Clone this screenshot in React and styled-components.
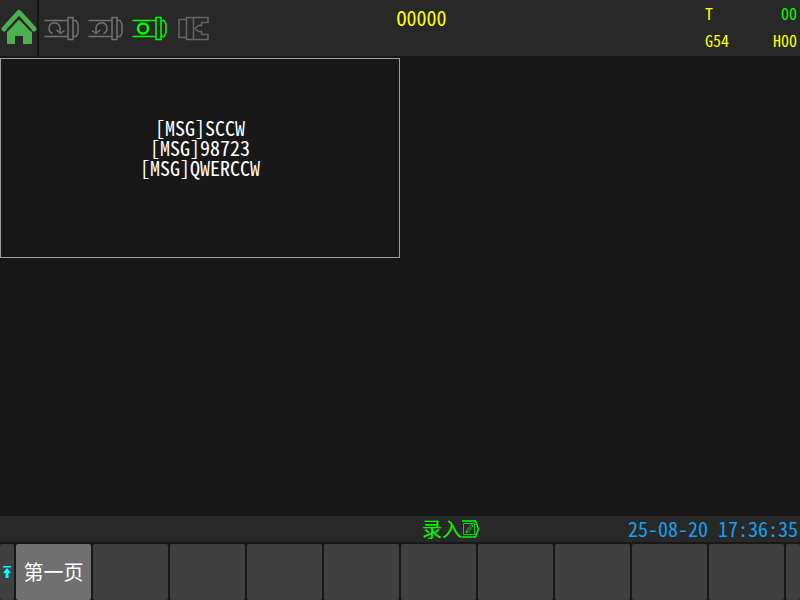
import React from "react";
import styled, { createGlobalStyle, css } from "styled-components";

const softKeys = ["第一页", "", "", "", "", "", "", "", "", ""];
const messages = ["[MSG]SCCW", "[MSG]98723", "[MSG]QWERCCW"];

const HomeIcon = () => (
  <svg width="36" height="36" viewBox="0 0 36 36" aria-hidden="true">
    <path
      d="M3 20 L18 3.500 L33 20"
      fill="none"
      stroke="#4caf50"
      strokeWidth="5"
      strokeLinecap="round"
      strokeLinejoin="round"
    />
    <path
      d="M18 10.500 L31 23 V34 Q31 35 30 35 H22 V27 H14 V35 H7 Q6 35 6 34 V23 Z"
      fill="#4caf50"
    />
    <path
      d="M6 21.500 L18 8.500 L30 21.500"
      fill="none"
      stroke="#282828"
      strokeWidth="2"
    />
  </svg>
);

const SpindleBody = () => (
  <>
    <path d="M0.500 5.500 H23.500 M0.500 21.500 H23.500" />
    <path d="M24 2.500 H29 V24.500 H24 Z" />
    <path d="M29 5.500 H32 L34 9 V18 L32 21.500 H29" />
  </>
);

const SpindleCw = () => (
  <DrawnIcon width="36" height="26" $color="#737373">
    <SpindleBody />
    <path d="M8.500 18.500 A5.500 5.500 0 1 1 16 13 V17 M12.500 15 L16.500 18.500 L20.500 15.500" />
  </DrawnIcon>
);

const SpindleCcw = () => (
  <DrawnIcon width="36" height="26" $color="#737373">
    <SpindleBody />
    <path d="M15.500 18.500 A5.500 5.500 0 1 0 8 13 V17 M4 15.500 L8 18.500 L12 15" />
  </DrawnIcon>
);

const SpindleStop = () => (
  <DrawnIcon width="36" height="26" $color="#00ff00">
    <SpindleBody />
    <circle cx="11" cy="13.500" r="5" strokeWidth="2.500" />
  </DrawnIcon>
);

const Chuck = () => (
  <DrawnIcon width="34" height="26" viewBox="-2 0 34 26" $color="#666666">
    <path d="M8.500 4.500 H1 V22.500 H8.500" />
    <path d="M8.500 2.500 H30 V7.500 H23.500 V10.500 H20.500 L17 13.500 L20.500 16.500 H23.500 V19.500 H30 V24.500 H8.500 Z" />
    <path d="M15.500 2.500 V24.500" />
  </DrawnIcon>
);

const EditIcon = () => (
  <DrawnIcon width="18" height="18" $color="#00ff00">
    <path d="M0 1 H13.500 L16.500 9 L13.500 17 H0" />
    <Thin d="M1.500 3.500 H12.500 V14.500 H1.500 Z" />
    <Thin d="M4 13 L4.500 10.500 L9.500 4.500 L11 6 L6 12 Z" />
  </DrawnIcon>
);

const PageUpIcon = () => (
  <svg width="8" height="14" viewBox="0 0 8 14" aria-hidden="true">
    <path
      d="M0 1 H8 V2.500 H0 Z M4 3 L8 8 H5.500 V13 H2.500 V8 H0 Z"
      fill="#00ffff"
    />
  </svg>
);

export default function App() {
  return (
    <>
      <GlobalStyle />
      <Screen>
        <Header>
          <HomeButton aria-label="Home">
            <HomeIcon />
          </HomeButton>
          <Indicators>
            <SpindleCw />
            <SpindleCcw />
            <SpindleStop />
            <Chuck />
          </Indicators>
          <ProgramName>O0000</ProgramName>
          <Readouts>
            <Readout>
              <span>T</span>
              <Value $active>00</Value>
            </Readout>
            <Readout>
              <span>G54</span>
              <Value>H00</Value>
            </Readout>
          </Readouts>
        </Header>

        <Main>
          <MessageBox>{messages.join("\n")}</MessageBox>
        </Main>

        <StatusBar>
          <Mode>
            录入
            <EditIcon />
          </Mode>
          <Clock>25-08-20 17:36:35</Clock>
        </StatusBar>

        <SoftKeys>
          <SoftKey aria-label="Up">
            <PageUpIcon />
          </SoftKey>
          {softKeys.map((label, i) => (
            <SoftKey key={i} $selected={i === 0}>
              {label}
            </SoftKey>
          ))}
          <SoftKey />
        </SoftKeys>
      </Screen>
    </>
  );
}

const GlobalStyle = createGlobalStyle`
  * {
    box-sizing: border-box;
  }

  body {
    margin: 0;
    background: #181818;
    color: #ffffff;
    font-family: "Noto Sans Mono CJK SC", "Noto Sans CJK SC", monospace;
    font-feature-settings: "hwid";
    font-size: 20px;
    font-weight: 300;
    line-height: 20px;
  }

  button {
    border: none;
    padding: 0;
    color: inherit;
    font: inherit;
  }
`;

const Screen = styled.div`
  display: flex;
  flex-direction: column;
  min-height: 100vh;
`;

const Header = styled.header`
  display: grid;
  grid-template-columns: 37px 172px 1fr 168px;
  column-gap: 2px;
  height: 56px;

  & > * {
    background: #282828;
  }
`;

const HomeButton = styled.button`
  display: flex;
  align-items: center;
  justify-content: center;
  padding-bottom: 2px;
`;

const Indicators = styled.div`
  display: flex;
  align-items: center;
  gap: 8px;
  padding-left: 5px;
  box-shadow: 2px 0 #282828;
`;

const DrawnIcon = styled.svg.attrs({ "aria-hidden": true })`
  flex: none;
  fill: none;
  stroke: ${(props) => props.$color};
  stroke-width: 1.5px;
`;

const Thin = styled.path`
  stroke-width: 1px;
  opacity: 0.8;
`;

const ProgramName = styled.div`
  padding-top: 8px;
  text-align: center;
  color: #ffff00;
  box-shadow: 2px 0 #282828;
`;

const Readouts = styled.div`
  display: flex;
  flex-direction: column;
  gap: 7px;
  padding: 3px 3px 0 73px;
  font-size: 16px;
  color: #ffff00;
`;

const Readout = styled.div`
  display: flex;
  justify-content: space-between;
`;

const Value = styled.span`
  ${(props) =>
    props.$active &&
    css`
      color: #00ff00;
    `}
`;

const Main = styled.main`
  flex: 1;
  padding-top: 2px;
`;

const MessageBox = styled.section`
  width: 50%;
  height: 200px;
  padding-top: 59px;
  border: 1px solid #a0a0a0;
  text-align: center;
  white-space: pre-line;
`;

const StatusBar = styled.div`
  display: flex;
  align-items: center;
  justify-content: flex-end;
  gap: 148px;
  height: 26px;
  margin-bottom: 2px;
  padding-right: 2px;
  border-radius: 2px;
  background: #282828;
`;

const Mode = styled.div`
  display: flex;
  align-items: center;
  color: #00ff00;
`;

const Clock = styled.time`
  color: #14a0f0;
`;

const SoftKeys = styled.nav`
  display: grid;
  grid-template-columns: 14px repeat(10, 1fr) 14px;
  column-gap: 2px;
  height: 56px;
`;

const SoftKey = styled.button`
  display: flex;
  align-items: center;
  justify-content: center;
  border-radius: 2px;
  background: ${(props) => (props.$selected ? "#707070" : "#404040")};
`;
